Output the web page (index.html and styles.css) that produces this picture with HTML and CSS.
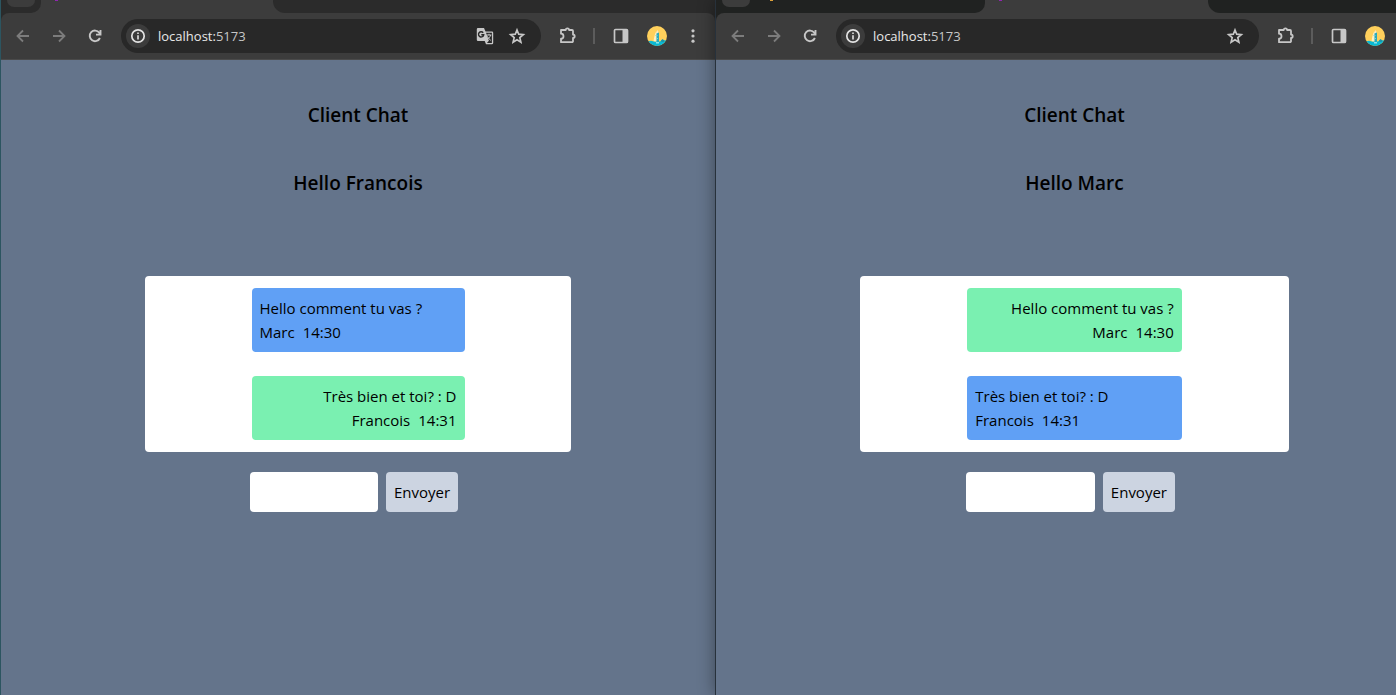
FILE: index.html
```html
<!DOCTYPE html>
<html lang="fr">
<head>
<meta charset="utf-8">
<meta name="viewport" content="width=device-width, initial-scale=1">
<title>Client Chat</title>
<link rel="stylesheet" href="styles.css">
</head>
<body>
<svg class="sprite" aria-hidden="true">
  <symbol id="back" viewBox="0 0 20 20"><path d="M16 10H5M10 4.500L4.500 10L10 15.500" fill="none" stroke="currentColor" stroke-width="1.800"/></symbol>
  <symbol id="forward" viewBox="0 0 20 20"><path d="M4 10H15M10 4.500L15.500 10L10 15.500" fill="none" stroke="currentColor" stroke-width="1.800"/></symbol>
  <symbol id="reload" viewBox="0 0 20 20"><path d="M14.900 12A5.300 5.300 0 1 1 14.300 6.700L15.300 8.300M15.500 4V8.600H11" fill="none" stroke="currentColor" stroke-width="1.900"/></symbol>
  <symbol id="info" viewBox="0 0 20 20"><circle cx="10" cy="10" r="6.200" fill="none" stroke="currentColor" stroke-width="1.700"/><path d="M9.200 9.200h1.600v4.300H9.200zM9.200 6.400h1.600V8H9.200z" fill="currentColor"/></symbol>
  <symbol id="translate" viewBox="0 0 20 20">
    <path d="M3 2h6l1.500 3.500H17a1.200 1.200 0 0 1 1.200 1.200V17a1.200 1.200 0 0 1-1.200 1.200h-6L9.700 15H3a1.200 1.200 0 0 1-1.200-1.200V3.200A1.200 1.200 0 0 1 3 2z" fill="currentColor"/>
    <path d="M11 6.700h5.900v10.200h-5l2-2.100z" fill="#282828"/>
    <path d="M8.200 6.800A2.600 2.600 0 1 0 8.700 8.800H6.300" fill="none" stroke="#282828" stroke-width="1.400"/>
    <path d="M11.400 9h5M14 7.800V9M15.600 9c-.5 2-1.600 3.200-3 4.300M12.400 10.400c.7 1.500 1.800 2.600 3.400 4" fill="none" stroke="currentColor" stroke-width="1"/>
  </symbol>
  <symbol id="star" viewBox="0 0 20 20"><path d="M10 4l1.700 4.200 4.600.4-3.500 3 1.100 4.500-3.900-2.400-3.900 2.400 1.100-4.500-3.500-3 4.600-.4z" fill="none" stroke="currentColor" stroke-width="1.700"/></symbol>
  <symbol id="puzzle" viewBox="0 0 20 20"><path d="M3 4H7.700a1.700 1.700 0 0 1 3.400 0H14a1 1 0 0 1 1 1V8.500a1.700 1.700 0 0 1 0 3.400V15.200a1 1 0 0 1-1 1H3V12.700a2.500 2.500 0 0 0 0-5z" fill="none" stroke="currentColor" stroke-width="1.800" stroke-linejoin="round"/></symbol>
  <symbol id="panel" viewBox="0 0 20 20"><rect x="3.500" y="3.500" width="13" height="13" rx="1" fill="none" stroke="currentColor" stroke-width="1.700"/><path d="M11.500 3.500h5v13h-5z" fill="currentColor"/></symbol>
  <symbol id="menu" viewBox="0 0 20 20"><g fill="currentColor"><circle cx="10" cy="4.800" r="1.600"/><circle cx="10" cy="10" r="1.600"/><circle cx="10" cy="15.200" r="1.600"/></g></symbol>
  <symbol id="avatar" viewBox="0 0 20 20">
    <clipPath id="disc"><circle cx="10" cy="10" r="10"/></clipPath>
    <g clip-path="url(#disc)">
      <path d="M0 0h20v20H0z" fill="#ffd05c"/>
      <path d="M6.500 15.500c.5-4 1.200-7 2.700-10v10z" fill="#fff1c4"/>
      <path d="M8.800 15.500V7l1.700-3 1 2v9.500z" fill="#f3e9c4"/>
      <path d="M9.500 7.500l2.500-1v9.500H9.500z" fill="#2aa9bb"/>
      <path d="M8.500 9h2v1h-2zM9 12h2v1H9z" fill="#7fd0cf"/>
      <path d="M0 15.500l4-.8 4 1 5-.3 2-1.400 2 .4 3-.4V20H0z" fill="#08b8d4"/>
      <path d="M14 14.500l1.500-1.500 2 1.500-1 1.500h-2z" fill="#1d95a8"/>
      <path d="M9 16h3v1.500H9z" fill="#8ee3e9"/>
    </g>
  </symbol>
</svg>
<main class="desktop">
  <section class="window window-left" aria-label="Francois">
    <header class="chrome">
      <div class="tabs">
        <div class="tab-start"><span class="tab-pill"></span></div>
        <div class="tab-active"><span class="favicon"></span></div>
        <div class="tab-rest"></div>
      </div>
      <nav class="toolbar" aria-label="Navigation">
        <button class="tool dim" aria-label="Retour"><svg><use href="#back"/></svg></button>
        <button class="tool dim" aria-label="Avancer"><svg><use href="#forward"/></svg></button>
        <button class="tool" aria-label="Actualiser"><svg><use href="#reload"/></svg></button>
        <div class="address">
          <button class="site-info" aria-label="Informations"><svg><use href="#info"/></svg></button>
          <a class="url" href="#">localhost:<span class="port">5173</span></a>
          <button class="tool" aria-label="Traduire"><svg><use href="#translate"/></svg></button>
          <button class="tool" aria-label="Favori"><svg><use href="#star"/></svg></button>
        </div>
        <button class="tool" aria-label="Extensions"><svg><use href="#puzzle"/></svg></button>
        <span class="divider"></span>
        <button class="tool" aria-label="Panneau"><svg><use href="#panel"/></svg></button>
        <button class="tool" aria-label="Profil"><svg><use href="#avatar"/></svg></button>
        <button class="tool" aria-label="Menu"><svg><use href="#menu"/></svg></button>
      </nav>
    </header>
    <div class="page">
      <h1 class="heading">Client Chat</h1>
      <h2 class="heading">Hello Francois</h2>
      <div class="chat">
        <article class="message received"><p>Hello comment tu vas ?</p><p class="meta"><span>Marc</span><time>14:30</time></p></article>
        <article class="message sent"><p>Très bien et toi? : D</p><p class="meta"><span>Francois</span><time>14:31</time></p></article>
      </div>
      <form class="composer">
        <input class="field" type="text" aria-label="Message">
        <button class="send" type="button">Envoyer</button>
      </form>
    </div>
  </section>
  <section class="window window-right" aria-label="Marc">
    <header class="chrome">
      <div class="tabs">
        <div class="tab-start"><span class="tab-pill"></span><span class="favicon"></span></div>
        <div class="tab-active"><span class="favicon"></span></div>
        <div class="tab-rest"></div>
      </div>
      <nav class="toolbar" aria-label="Navigation">
        <button class="tool dim" aria-label="Retour"><svg><use href="#back"/></svg></button>
        <button class="tool dim" aria-label="Avancer"><svg><use href="#forward"/></svg></button>
        <button class="tool" aria-label="Actualiser"><svg><use href="#reload"/></svg></button>
        <div class="address">
          <button class="site-info" aria-label="Informations"><svg><use href="#info"/></svg></button>
          <a class="url" href="#">localhost:<span class="port">5173</span></a>
          <button class="tool" aria-label="Favori"><svg><use href="#star"/></svg></button>
        </div>
        <button class="tool" aria-label="Extensions"><svg><use href="#puzzle"/></svg></button>
        <span class="divider"></span>
        <button class="tool" aria-label="Panneau"><svg><use href="#panel"/></svg></button>
        <button class="tool" aria-label="Profil"><svg><use href="#avatar"/></svg></button>
        <button class="tool" aria-label="Menu"><svg><use href="#menu"/></svg></button>
      </nav>
    </header>
    <div class="page">
      <h1 class="heading">Client Chat</h1>
      <h2 class="heading">Hello Marc</h2>
      <div class="chat">
        <article class="message sent"><p>Hello comment tu vas ?</p><p class="meta"><span>Marc</span><time>14:30</time></p></article>
        <article class="message received"><p>Très bien et toi? : D</p><p class="meta"><span>Francois</span><time>14:31</time></p></article>
      </div>
      <form class="composer">
        <input class="field" type="text" aria-label="Message">
        <button class="send" type="button">Envoyer</button>
      </form>
    </div>
  </section>
</main>
</body>
</html>
```

FILE: styles.css
```css
*, *::before, *::after { box-sizing: border-box; }

body {
  margin: 0;
  font-family: "Open Sans", "Noto Sans", sans-serif;
  font-size: 15px;
  line-height: 24px;
  color: #000;
  background: #64748b;
}

h1, h2, p { margin: 0; }

button, input {
  font: inherit;
  color: inherit;
  border: 0;
  padding: 0;
  background: none;
}

.sprite { position: absolute; width: 0; height: 0; }

.desktop {
  display: flex;
  min-height: 100vh;
  overflow: hidden;
}

.window {
  display: flex;
  flex-direction: column;
  flex: none;
  background: #64748b;
}

.window-left {
  width: 51.22%;
  border-left: 1px solid #2c5560;
  --strip: #2b2b2b;
}

.window-right {
  width: 51.43%;
  position: relative;
  border-left: 1px solid #27313b;
  box-shadow: 0 0 16px rgba(0, 0, 0, 0.4);
  --strip: #202221;
}

.chrome { background: var(--strip); }

.tabs {
  display: flex;
  height: 13px;
  background: #3c3c3c;
}

.tab-start {
  display: flex;
  flex: none;
  width: 40px;
  padding-left: 6px;
  background: var(--strip);
  border-bottom-right-radius: 10px;
}

.window-right .tab-start {
  width: 269px;
  gap: 20px;
}

.tab-pill {
  width: 28px;
  height: 7px;
  background: #3c3c3c;
  border-radius: 0 0 10px 10px;
}

.tab-active {
  display: flex;
  flex: none;
  width: 232px;
  padding-left: 14px;
}

.window-right .tab-active { width: 223px; }

.favicon {
  width: 3px;
  height: 1px;
  background: #9026b0;
}

.tab-start .favicon { background: #dda23a; }

.tab-rest {
  flex: 1;
  background: var(--strip);
  border-bottom-left-radius: 12px;
}

.toolbar {
  display: flex;
  align-items: center;
  gap: 4px;
  height: 47px;
  padding: 0 6px;
  background: #3c3c3c;
  border-bottom: 1px solid #4a4a4a;
  border-radius: 8px 8px 0 0;
}

.tool {
  display: grid;
  place-items: center;
  flex: none;
  width: 32px;
  height: 32px;
  color: #c7c7c7;
}

.tool svg { width: 20px; height: 20px; }

.dim { color: #7c7c7c; }

.address {
  display: flex;
  align-items: center;
  flex: 1;
  height: 34px;
  margin: 0 7px 0 6px;
  padding: 0 8px 0 5px;
  background: #282828;
  border-radius: 17px;
}

.site-info {
  display: grid;
  place-items: center;
  width: 24px;
  height: 24px;
  margin-right: 8px;
  color: #e3e3e3;
  background: #3c3c3c;
  border-radius: 50%;
}

.site-info svg { width: 20px; height: 20px; }

.url {
  flex: 1;
  font-size: 13px;
  color: #e8e8e8;
  text-decoration: none;
}

.port { color: #c7c7c7; }

.divider {
  width: 2px;
  height: 16px;
  margin: 0 6px 0 5px;
  background: #5c5c5c;
}

.page {
  display: flex;
  flex-direction: column;
  align-items: center;
  padding: 41px 2px 40px;
}

.heading {
  margin-bottom: 40px;
  font-size: 19px;
  font-weight: 600;
  line-height: 28px;
}

.chat {
  display: flex;
  flex-direction: column;
  align-items: center;
  gap: 24px;
  width: 60%;
  margin-top: 39px;
  padding: 12px 0;
  background: #fff;
  border-radius: 4px;
}

.window-right .page { padding-left: 1px; padding-right: 1px; }

.message {
  width: 50%;
  padding: 8px;
  border-radius: 4px;
}

.received { background: #60a0f5; }

.sent {
  background: #7af0b1;
  text-align: right;
}

.meta { display: flex; gap: 8px; }

.sent .meta { justify-content: flex-end; }

.composer {
  display: flex;
  justify-content: center;
  gap: 8px;
  width: 60%;
  margin-top: 20px;
  padding-right: 8px;
}

.field {
  width: 30.6%;
  height: 40px;
  padding: 8px;
  background: #fff;
  border-radius: 4px;
}

.send {
  padding: 8px;
  background: #ccd4e1;
  border-radius: 4px;
}
```
